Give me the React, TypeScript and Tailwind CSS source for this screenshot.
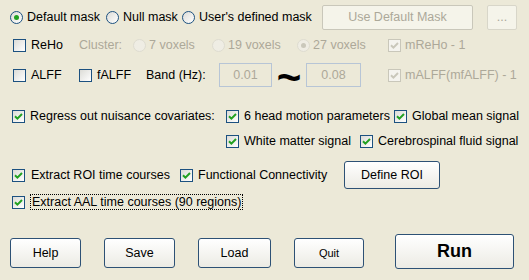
import React from "react";

function CheckBox({ checked = false, disabled = false }: { checked?: boolean; disabled?: boolean }) {
  return (
    <span
      className={`flex h-[13px] w-[13px] shrink-0 items-center justify-center border ${
        disabled
          ? "border-[#c9c7ba] bg-[#f4f3ee]"
          : "border-[#1c5180] bg-gradient-to-br from-[#dcdcd7] to-white"
      }`}
    >
      {checked && (
        <svg width="9" height="9" viewBox="0 0 9 9">
          <path
            d="M1 4.2 L3.4 6.6 L8 2"
            fill="none"
            stroke={disabled ? "#c9c7ba" : "#21a121"}
            strokeWidth="2"
          />
        </svg>
      )}
    </span>
  );
}

function Radio({ checked = false, disabled = false }: { checked?: boolean; disabled?: boolean }) {
  return (
    <span
      className={`flex h-[13px] w-[13px] shrink-0 items-center justify-center rounded-full border ${
        disabled
          ? "border-[#dedcd0] bg-[#efede4]"
          : "border-[#1c5180] bg-gradient-to-br from-[#dcdcd7] to-white"
      }`}
    >
      {checked && (
        <span
          className={`h-[5px] w-[5px] rounded-full ${disabled ? "bg-[#cac8bb]" : "bg-[#21a121]"}`}
        />
      )}
    </span>
  );
}

function Btn({ children, className = "" }: { children: React.ReactNode; className?: string }) {
  return (
    <div
      className={`flex items-center justify-center rounded-[3px] border border-[#2d5175] bg-gradient-to-b from-white to-[#ecebe4] text-black ${className}`}
    >
      {children}
    </div>
  );
}

export default function App() {
  return (
    <div
      className="h-[280px] w-[529px] overflow-hidden bg-[#ece9d8] text-[12.5px] text-black"
      style={{ fontFamily: '"Liberation Sans", Arial, sans-serif' }}
    >
      {/* mask row */}
      <div className="mt-[5px] flex h-[25px] items-center pl-[10px]">
        <div className="flex w-[96px] items-center gap-[4px]">
          <Radio checked />
          <span>Default mask</span>
        </div>
        <div className="flex w-[76px] items-center gap-[4px]">
          <Radio />
          <span>Null mask</span>
        </div>
        <div className="flex w-[140px] items-center gap-[4px]">
          <Radio />
          <span>User's defined mask</span>
        </div>
        <div className="flex h-[25px] w-[151px] items-center justify-center rounded-[2px] border border-[#c9c7ba] bg-[#f5f4ea] text-[#aca899]">
          Use Default Mask
        </div>
        <div className="ml-[14px] flex h-[25px] w-[30px] items-center justify-center rounded-[2px] border border-[#d8d6c9] bg-[#f5f4ea] text-[#aca899]">
          ...
        </div>
      </div>

      {/* ReHo row */}
      <div className="mt-[5px] flex h-[20px] items-center pl-[13px]">
        <div className="flex w-[66px] items-center gap-[5px]">
          <CheckBox />
          <span>ReHo</span>
        </div>
        <span className="w-[54px] text-[#aca899]">Cluster:</span>
        <div className="flex w-[79px] items-center gap-[3px] text-[#aca899]">
          <Radio disabled />
          <span>7 voxels</span>
        </div>
        <div className="flex w-[85px] items-center gap-[3px] text-[#aca899]">
          <Radio disabled />
          <span>19 voxels</span>
        </div>
        <div className="flex w-[91px] items-center gap-[3px] text-[#aca899]">
          <Radio checked disabled />
          <span>27 voxels</span>
        </div>
        <div className="flex items-center gap-[4px] text-[#aca899]">
          <CheckBox checked disabled />
          <span>mReHo - 1</span>
        </div>
      </div>

      {/* ALFF row */}
      <div className="mt-[8px] flex h-[24px] items-center pl-[13px]">
        <div className="flex w-[66px] items-center gap-[5px]">
          <CheckBox />
          <span>ALFF</span>
        </div>
        <div className="flex w-[67px] items-center gap-[5px]">
          <CheckBox />
          <span>fALFF</span>
        </div>
        <span className="w-[73px]">Band (Hz):</span>
        <div className="flex h-[24px] w-[53px] items-center justify-center border border-[#b7c5d6] bg-[#ece9d8] text-[#aca899]">
          0.01
        </div>
        <div className="flex h-[24px] w-[34px] items-center justify-center">
          <span className="mt-[6px] text-[42px] font-bold leading-none">~</span>
        </div>
        <div className="flex h-[24px] w-[55px] items-center justify-center border border-[#b7c5d6] bg-[#ece9d8] text-[#aca899]">
          0.08
        </div>
        <div className="ml-[27px] flex items-center gap-[4px] text-[#aca899]">
          <CheckBox checked disabled />
          <span>mALFF(mfALFF) - 1</span>
        </div>
      </div>

      {/* covariates */}
      <div className="mt-[19px] flex h-[20px] items-center pl-[12px]">
        <div className="flex w-[214px] items-center gap-[5px]">
          <CheckBox checked />
          <span>Regress out nuisance covariates:</span>
        </div>
        <div className="flex w-[168px] items-center gap-[5px]">
          <CheckBox checked />
          <span>6 head motion parameters</span>
        </div>
        <div className="flex items-center gap-[5px]">
          <CheckBox checked />
          <span>Global mean signal</span>
        </div>
      </div>
      <div className="mt-[5px] flex h-[20px] items-center pl-[226px]">
        <div className="flex w-[134px] items-center gap-[5px]">
          <CheckBox checked />
          <span>White matter signal</span>
        </div>
        <div className="flex items-center gap-[5px]">
          <CheckBox checked />
          <span>Cerebrospinal fluid signal</span>
        </div>
      </div>

      {/* ROI */}
      <div className="mt-[10px] flex h-[28px] items-center pl-[12px]">
        <div className="flex w-[168px] items-center gap-[6px]">
          <CheckBox checked />
          <span>Extract ROI time courses</span>
        </div>
        <div className="flex w-[164px] items-center gap-[5px]">
          <CheckBox checked />
          <span>Functional Connectivity</span>
        </div>
        <Btn className="h-[28px] w-[96px]">Define ROI</Btn>
      </div>
      <div className="mt-[3px] flex h-[20px] items-center pl-[12px]">
        <div className="flex items-center gap-[5px]">
          <CheckBox checked />
          <span className="border border-dotted border-black px-[1px] leading-[14px]">
            Extract AAL time courses (90 regions)
          </span>
        </div>
      </div>

      {/* bottom buttons */}
      <div className="mt-[22px] flex h-[35px] items-start pl-[10px]">
        <Btn className="mt-[4px] h-[30px] w-[71px]">Help</Btn>
        <Btn className="ml-[23px] mt-[4px] h-[30px] w-[71px]">Save</Btn>
        <Btn className="ml-[23px] mt-[4px] h-[30px] w-[73px]">Load</Btn>
        <Btn className="ml-[23px] mt-[4px] h-[30px] w-[70px] text-[11px]">Quit</Btn>
        <Btn className="ml-[31px] h-[35px] w-[119px] text-[18px] font-bold">Run</Btn>
      </div>
    </div>
  );
}
